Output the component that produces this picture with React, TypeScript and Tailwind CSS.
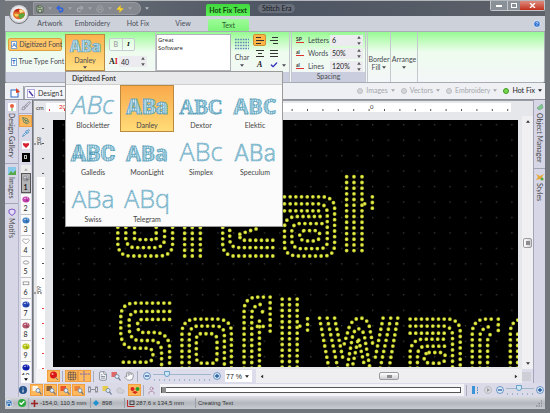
import { useState } from 'react'
import type { ReactNode } from 'react'
import {
  Brush, Check, Grid3x3, Hand, HelpCircle, PenTool, Pipette, Redo2, Save, Undo2, Zap, FileText, Cloud, User, Printer
} from 'lucide-react'

const ribbonTabs = [
  { name: 'Artwork', width: 'w-[38px]' },
  { name: 'Embroidery', width: 'w-[47px]' },
  { name: 'Hot Fix', width: 'w-[44px]' },
  { name: 'View', width: 'w-[46px]' },
]

interface FontSample {
  name: string
  sample: string
  kind: 'thin' | 'thick'
  italic?: boolean
  weight: number
  family: string
  size: number
}

const fonts: FontSample[] = [
  { name: 'Blockletter', sample: 'ABc', kind: 'thin', italic: true, weight: 300, family: 'Open Sans', size: 28 },
  { name: 'Danley', sample: 'ABa', kind: 'thick', weight: 900, family: 'Inter', size: 22 },
  { name: 'Dextor', sample: 'ABC', kind: 'thick', weight: 700, family: 'Liberation Serif', size: 22 },
  { name: 'Elektic', sample: 'ABC', kind: 'thick', weight: 700, family: 'Open Sans', size: 23 },
  { name: 'Galledis', sample: 'ABC', kind: 'thick', weight: 900, family: 'Roboto', size: 24 },
  { name: 'MoonLight', sample: 'ABa', kind: 'thick', weight: 700, family: 'Open Sans', size: 23 },
  { name: 'Simplex', sample: 'ABc', kind: 'thin', weight: 300, family: 'Open Sans', size: 27 },
  { name: 'Speculum', sample: 'ABa', kind: 'thin', weight: 300, family: 'Inter', size: 24 },
  { name: 'Swiss', sample: 'ABa', kind: 'thin', weight: 300, family: 'Open Sans', size: 26 },
  { name: 'Telegram', sample: 'ABq', kind: 'thin', weight: 300, family: 'Open Sans', size: 27 },
]

const stones = [
  { id: 1, shape: 'gem', color: '#9a9aa2' },
  { id: 2, shape: 'gem', color: '#c53fae' },
  { id: 3, shape: 'gem', color: '#3f7fc4' },
  { id: 4, shape: 'heart', color: '#8a8a8a' },
  { id: 5, shape: 'oval', color: '#8a8a8a' },
  { id: 6, shape: 'rect', color: '#8a8a8a' },
  { id: 7, shape: 'gem', color: '#2748b8' },
  { id: 8, shape: 'gem', color: '#b5546c' },
  { id: 9, shape: 'gem', color: '#b9c81c' },
  { id: 10, shape: 'gem', color: '#1420b4' },
]

// Rows of stones for each letter, three units per screen pixel
const stitchPaths = [
  // G
  'M53 120V220Q55 257 90 257H180Q217 255 217 220V150',
  'M77 120V205Q80 232 105 232H165Q193 230 193 205V150',
  'M103 120V205Q110 208 120 208H168V150',
  // r
  'M253 257V120', 'M276 257V120', 'M300 257V120',
  // e
  'M517 257H398Q367 252 367 222V120',
  'M517 232H415Q388 232 388 205V120',
  'M517 210H426L412 194L447 182L480 172',
  // a
  'M552 80H670Q702 84 702 115V225Q700 257 670 257H590Q552 255 552 225V170Q554 139 590 139H660',
  'M552 101H655Q680 103 680 130V215Q680 235 655 235H600Q574 233 574 210V180Q577 160 597 160H665',
  'M552 122H657',
  'M610 181H645Q660 182 657 200Q655 212 640 212H615Q597 210 597 195Z',
  // t
  'M738 20V258', 'M760 20V258', 'M784 20V258', 'M792 101h1', 'M815 80V126',
  // S
  'M208 398H98Q62 402 62 440V490Q65 533 102 533H145Q160 535 158 560Q155 575 140 575H62',
  'M208 423H112Q87 425 87 450V475Q90 510 118 510H160Q184 514 184 545V610',
  'M208 447H125Q110 450 112 470Q115 486 130 486H170Q206 492 208 530V610',
  'M62 598H165',
  // o
  'M245 610V482Q250 446 288 446H355Q393 450 393 485V610',
  'M267 610V492Q270 467 292 467H350Q372 470 372 492V610',
  'M300 490H335Q352 492 350 515V560Q350 578 335 578H305Q288 576 288 560V505Q290 490 300 490',
  // f
  'M431 610V415Q435 380 472 380H495',
  'M454 610V428Q458 402 486 402',
  'M477 588V440', 'M486 424h1', 'M471 468H495', 'M509 380V494',
  // t
  'M545 386V610', 'M567 386V610', 'M590 386V610', 'M598 467h1', 'M621 445V493',
  // w
  'M657 443L688 610', 'M680 443L712 595', 'M702 443L728 570',
  'M891 443L862 610', 'M870 443L838 595', 'M847 443L822 570',
  'M731 520L747 465Q760 443 780 443Q800 445 806 468L817 525',
  'M738 600L757 490Q773 460 790 490L809 600',
  'M757 580L773 503L790 580',
  // a
  'M928 446H1045Q1078 450 1078 485V610',
  'M928 467H1030Q1055 470 1055 495V610',
  'M928 488H1034',
  'M928 610V545Q932 506 968 506H1036',
  'M950 610V555Q952 527 975 527H1045',
  'M985 546H1020Q1035 548 1033 562Q1032 578 1015 578H985Q970 575 970 562Q970 548 985 546',
  // r
  'M1114 610V482Q1120 446 1155 446H1176',
  'M1137 610V495Q1142 468 1176 468',
  'M1160 610V510Q1162 490 1176 490',
  'M1192 446V493',
  // e
  'M1228 610V482Q1232 448 1265 446',
  'M1250 610V490Q1254 468 1280 468',
]

function Caret({ className = '' }: { className?: string }) {
  return (
    <svg viewBox="0 0 6 4" className={`w-1 h-[3px] shrink-0 ${className}`} fill="currentColor">
      <path d="M0 0h6L3 4z" />
    </svg>
  )
}

function Spinner() {
  return (
    <svg viewBox="0 0 4 10" className="w-1 h-[9px] shrink-0 text-[#555]" fill="currentColor">
      <path d="M0 3h4L2 0zM0 7h4L2 10z" />
    </svg>
  )
}

function Separator() {
  return <span className="w-px h-[11px] mx-[2px] bg-[#a9acba] shrink-0" />
}

function FontPreview({ font, className = '' }: { font: FontSample; className?: string }) {
  const thin = font.kind === 'thin'
  return (
    <svg viewBox="0 0 50 30" className={`overflow-visible ${className}`} aria-hidden="true">
      <defs>
        <pattern id="threads" width="2.500" height="2.500" patternUnits="userSpaceOnUse">
          <rect width="2.500" height="2.500" fill="#86bdd2" />
          <rect width="0.900" height="2.500" fill="#e2f0f5" />
        </pattern>
      </defs>
      <text
        x="25"
        y="24"
        textAnchor="middle"
        fontFamily={`"${font.family}", sans-serif`}
        fontSize={font.size}
        fontWeight={font.weight}
        fontStyle={font.italic ? 'italic' : 'normal'}
        fill={thin ? '#8fc4d8' : 'url(#threads)'}
        stroke="#4f9ab6"
        strokeWidth={thin ? 0.5 : 0.9}
        strokeDasharray={thin ? '1.5 0.8' : '1.8 0.4'}
      >
        {font.sample}
      </text>
    </svg>
  )
}

function StoneIcon({ shape, color }: { shape: string; color: string }) {
  return (
    <svg viewBox="0 0 10 8" className="w-[8px] h-[7px] shrink-0">
      {shape === 'heart' && <path d="M5 7L1 3.5C0 1 3.5 0 5 2C6.500 0 10 1 9 3.500Z" fill="#fff" stroke={color} strokeWidth="0.8" />}
      {shape === 'oval' && <ellipse cx="5" cy="4" rx="3.500" ry="2" fill="#fff" stroke={color} />}
      {shape === 'rect' && <rect x="1.500" y="2" width="7" height="3.500" fill="#fff" stroke={color} />}
      {shape === 'gem' && (
        <>
          <ellipse cx="5" cy="4" rx="4.500" ry="3.800" fill={color} />
          <path d="M2 3L4 1.500L5 3.500ZM6 1l2 1-1 1z" fill="#fff" opacity="0.8" />
          <path d="M5 4l3 1-2 2z" fill="#000" opacity="0.3" />
        </>
      )}
    </svg>
  )
}

function ToolButton({ label, active, children }: { label: string; active?: boolean; children: ReactNode }) {
  return (
    <button
      type="button"
      aria-label={label}
      className={`w-[13px] h-[12px] shrink-0 flex items-center justify-center ${active ? 'bg-[#ffb85c] border border-[#f0a040]' : ''}`}
    >
      {children}
    </button>
  )
}

function ZoomCircle({ sign }: { sign: '-' | '+' }) {
  return (
    <button type="button" aria-label={sign === '-' ? 'Zoom out' : 'Zoom in'} className="shrink-0">
      <svg viewBox="0 0 10 10" className="w-2 h-2 block">
        <circle cx="5" cy="5" r="4.300" fill="#dcecf8" stroke="#4a7fb8" />
        <path d={sign === '-' ? 'M2.500 5h5' : 'M2.500 5h5M5 2.500v5'} stroke="#24589a" strokeWidth="1.600" />
      </svg>
    </button>
  )
}

function ZoomSlider({ label, value, className }: { label: string; value: number; className: string }) {
  return (
    <span className={`flex flex-col gap-px ${className}`}>
      <input
        type="range"
        aria-label={label}
        defaultValue={value}
        className="appearance-none w-full h-[6px] bg-transparent [&::-webkit-slider-runnable-track]:h-px [&::-webkit-slider-runnable-track]:bg-[#9fb6cc] [&::-webkit-slider-thumb]:appearance-none [&::-webkit-slider-thumb]:w-[6px] [&::-webkit-slider-thumb]:h-[6px] [&::-webkit-slider-thumb]:-mt-[3px] [&::-webkit-slider-thumb]:rounded-b-full [&::-webkit-slider-thumb]:border [&::-webkit-slider-thumb]:border-[#6aa0c8] [&::-webkit-slider-thumb]:bg-[#cfe6f5]"
      />
      <svg className="w-full h-[2px]">
        <line x1="1" y1="1" x2="100%" y2="1" stroke="#9fb6cc" strokeWidth="2" strokeDasharray="1 4" />
      </svg>
    </span>
  )
}

function TitleBar() {
  return (
    <header className="h-4 shrink-0 flex items-start border-t border-[#b4b8bc] bg-linear-to-r from-[#74777c] via-[#4d5563] to-[#5d6168]">
      <div className="ml-[28px] mt-px h-[13px] w-[108px] pl-[2px] flex items-center gap-1 rounded-r-full border border-[#9a9da3] bg-[#85888e] text-[#a4a7ac]">
        <button type="button" aria-label="Save"><Save className="w-2 h-2 text-[#2e4326]" fill="#b8c8b0" /></button>
        <Caret />
        <button type="button" aria-label="Undo"><Undo2 className="w-2 h-2 text-[#2f62e0]" strokeWidth={5} /></button>
        <Caret />
        <button type="button" aria-label="Redo"><Redo2 className="w-2 h-2" strokeWidth={4} /></button>
        <Caret />
        <button type="button" aria-label="Print"><Printer className="w-2 h-2" /></button>
        <Caret />
        <button type="button" aria-label="Run"><Zap className="w-2 h-2 text-[#e8c020]" fill="#f6d93c" /></button>
        <Caret />
      </div>
      <Caret className="ml-1 mt-[6px] text-[#b8bbc0]" />
      <div className="ml-[57px] mt-[3px] w-[44px] h-3 flex items-center justify-center rounded-t-xs bg-linear-to-b from-[#3fd83c] to-[#5cf058] text-[#10420f] font-bold whitespace-nowrap">
        Hot Fix Text
      </div>
      <h1 className="ml-2 mt-[3px] px-1 rounded-full bg-white/15 text-[#15181d] whitespace-nowrap">Stitch Era</h1>
      <div className="ml-auto h-[10px] flex rounded-b-xs overflow-hidden border border-t-0 border-[#c3c7cc]">
        <button type="button" aria-label="Minimize" className="w-[17px] flex items-center justify-center bg-[#8a9098] border-r border-[#c3c7cc]">
          <span className="w-[6px] h-[2px] bg-white" />
        </button>
        <button type="button" aria-label="Maximize" className="w-[12px] flex items-center justify-center bg-[#8a9098]">
          <span className="w-[6px] h-[5px] border border-white" />
        </button>
        <button type="button" aria-label="Close" className="w-[24px] flex items-center justify-center bg-linear-to-b from-[#dc8a7c] to-[#c22c18]">
          <svg viewBox="0 0 8 6" className="w-[7px] h-[5px]" stroke="#fff" strokeWidth="1.600"><path d="M1 0l6 6M7 0L1 6" /></svg>
        </button>
      </div>
    </header>
  )
}

function AppButton() {
  return (
    <button type="button" aria-label="Application menu" className="absolute left-[9px] top-[4px] w-5 h-5 z-10">
      <svg viewBox="0 0 20 20">
        <circle cx="10" cy="10" r="9.500" fill="#d4d6da" stroke="#6d7177" />
        <circle cx="10" cy="10" r="7.500" fill="#eceef0" />
        <ellipse cx="10" cy="10" rx="6" ry="5.200" fill="#e06a28" />
        <path d="M4.500 8q2.500-4 6-3l-1 3q-3-1-5 0z" fill="#c02c20" />
        <path d="M9 11q4-3 7-1-1 4-5 5z" fill="#5aa83c" />
        <path d="M5 10q4-1 5 1l-2 2q-2 0-3-3z" fill="#f4cf58" />
        <path d="M10 6q4-1 5 2l-4 1z" fill="#ffe08a" />
      </svg>
    </button>
  )
}

function TabStrip() {
  return (
    <nav className="h-[15px] shrink-0 flex items-stretch pl-[26px] bg-[#cdd1da] text-[#4a4e58]">
      {ribbonTabs.map((tab) => (
        <button key={tab.name} type="button" className={`${tab.width} text-center whitespace-nowrap`}>{tab.name}</button>
      ))}
      <button type="button" className="w-[41px] mt-[3px] ml-[2px] rounded-t-xs bg-linear-to-b from-[#9dfb98] to-[#7df57a] text-[#2d5c2c]">
        Text
      </button>
      <button type="button" aria-label="Help" className="ml-auto mr-1">
        <HelpCircle className="w-2 h-2 text-white" fill="#2f6fd0" />
      </button>
    </nav>
  )
}

function FontMenu({ selected, onSelect }: { selected: string; onSelect: (name: string) => void }) {
  return (
    <div className="absolute left-0 top-full z-20 w-[218px] bg-[#fbfbfb] border border-[#9a9a9a] text-[#444]">
      <div className="h-[13px] px-[6px] flex items-center bg-[#e8e9eb] border-b border-[#d0d0d0] font-bold">Digitized Font</div>
      <div className="grid grid-cols-4">
        {fonts.map((font) => (
          <button
            key={font.name}
            type="button"
            onClick={() => onSelect(font.name)}
            className={`h-[47px] flex flex-col items-center justify-between pt-[6px] pb-px border ${
              selected === font.name
                ? 'border-[#b98a40] bg-linear-to-b from-[#f9a94a] to-[#ffdc78]'
                : 'border-transparent'
            }`}
          >
            <FontPreview font={font} className="w-[50px] h-[28px]" />
            <span className="leading-[9px]">{font.name}</span>
          </button>
        ))}
      </div>
    </div>
  )
}

function AlignIcon({ d }: { d: string }) {
  return (
    <svg viewBox="0 0 8 8" className="w-2 h-2" stroke="#333" strokeWidth="1" fill="none"><path d={d} /></svg>
  )
}

function SpacingRow({ label, value, icon }: { label: string; value: string; icon: string }) {
  return (
    <label className="h-[12px] flex items-center">
      <span className="w-2 mr-1 text-[5px] leading-[5px] font-bold text-[#333] border-b border-[#e03030]">{icon}</span>
      <span className="w-[22px]">{label}</span>
      <input defaultValue={value} className="w-[25px] h-[11px] pl-[2px] bg-[#ececf0] text-[#222] outline-none" />
      <span className="w-2 h-[11px] flex items-center justify-center bg-[#ececf0]"><Spinner /></span>
    </label>
  )
}

function Ribbon() {
  const [fontName, setFontName] = useState('Danley')
  const current = fonts.find((f) => f.name === fontName) || fonts[1]

  return (
    <section className="h-[52px] shrink-0 flex border border-[#a8acb4] rounded-b-xs bg-linear-to-b from-[#96fa92] via-[#eefcee] via-40% to-[#f4f6f8] text-[#4a4a52]">
      {/* Font group */}
      <div className="w-[150px] flex flex-col border-r border-[#c4c8ce]">
        <div className="flex-1 flex pt-[2px]">
          <div className="w-[59px] pl-[2px] pt-1 flex flex-col gap-1 items-start">
            <button type="button" className="h-[13px] w-[54px] pl-[2px] flex items-center gap-[2px] rounded-xs border border-[#e0a040] bg-[#ffc566] whitespace-nowrap">
              <span className="w-[7px] h-[8px] border border-[#7aa0d0] bg-white text-[6px] leading-[6px] font-bold text-[#2868c0]">A</span>
              Digitized Font
            </button>
            <button type="button" className="h-[13px] w-[56px] pl-[3px] flex items-center gap-[2px] whitespace-nowrap">
              <span className="w-[7px] h-[8px] border border-[#7aa0d0] bg-white text-[6px] leading-[6px] font-bold text-[#2868c0]">T</span>
              True Type Font
            </button>
          </div>
          <div className="relative h-[37px]">
            <button type="button" className="w-[40px] h-[37px] flex flex-col items-center border border-[#b98a40] bg-linear-to-b from-[#fbb24e] to-[#ffdf80]">
              <FontPreview font={current} className="w-[36px] h-[21px]" />
              <span className="leading-[8px]">{current.name}</span>
              <Caret className="mt-[2px]" />
            </button>
            <FontMenu selected={fontName} onSelect={setFontName} />
          </div>
          <div className="pl-1 pt-1 flex flex-col gap-1">
            <div className="w-[26px] h-[13px] flex rounded-xs border border-[#c8ccd2] bg-white/50">
              <button type="button" className="flex-1 text-[#a8a8b0] font-bold">B</button>
              <button type="button" className="flex-1 border-l border-[#c8ccd2] text-black italic font-bold font-['Liberation_Serif',serif]">I</button>
            </div>
            <label className="h-[13px] flex items-center">
              <span className="w-[10px] font-bold text-[8px] text-[#222] font-['Liberation_Serif',serif]">A<span className="text-[#e02020]">I</span></span>
              <input aria-label="Font size" defaultValue="40" className="w-[20px] h-[11px] pl-[2px] bg-[#ececf0] text-[#222] outline-none" />
              <span className="w-2 h-[11px] flex items-center justify-center bg-[#ececf0]"><Spinner /></span>
            </label>
          </div>
        </div>
        <div className="h-[10px] bg-[#c9cddd]" />
      </div>

      {/* Text group */}
      <div className="w-[134px] flex flex-col border-r border-[#c4c8ce]">
        <div className="flex-1 flex pt-[2px]">
          <textarea
            aria-label="Text"
            defaultValue={'Great\nSoftware'}
            className="w-[75px] h-[37px] p-px resize-none overflow-hidden bg-white border border-[#b0b4ba] text-[6px] leading-[8px] text-[#222] outline-none font-['Open_Sans',sans-serif]"
          />
          <button type="button" className="w-[22px] pt-1 flex flex-col items-center">
            <svg viewBox="0 0 14 12" className="w-[14px] h-[12px]">
              <path d="M0 1.500h14M0 4.500h14M0 7.500h14M0 10.500h14" stroke="#5c86b4" strokeWidth="1.500" strokeDasharray="1.600 1" />
            </svg>
            <span className="mt-[3px] leading-[8px]">Char</span>
            <Caret className="mt-[3px]" />
          </button>
          <div className="grid grid-cols-2 w-[28px] content-start gap-px items-center justify-items-center">
            <button type="button" aria-label="Align left" className="w-[13px] h-[12px] flex items-center justify-center rounded-xs border border-[#d09030] bg-[#ffb648]"><AlignIcon d="M0 1.500h5M0 4.500h8M0 7.500h5" /></button>
            <button type="button" aria-label="Align right"><AlignIcon d="M2 1.500h6M0 4.500h8M3 7.500h5" /></button>
            <button type="button" aria-label="Center" className="h-3"><AlignIcon d="M0 1.500h8M2 4.500h4M0 7.500h8" /></button>
            <button type="button" aria-label="Justify" className="h-3"><AlignIcon d="M0 1.500h8M0 4.500h8M0 7.500h8" /></button>
            <button type="button" aria-label="Script" className="text-[8px] leading-[9px] italic font-bold text-[#222] font-['Liberation_Serif',serif]">A</button>
            <button type="button" aria-label="Spelling"><Check className="w-2 h-2 text-[#3838c0]" strokeWidth={4} /></button>
          </div>
          <Caret className="mt-[30px] ml-px" />
        </div>
        <div className="h-[10px] bg-[#c9cddd]" />
      </div>

      {/* Spacing group */}
      <fieldset className="w-[75px] ml-px flex flex-col border-x border-[#c4c8ce]">
        <div className="flex-1 pl-1 pt-[2px] flex flex-col gap-px">
          <SpacingRow label="Letters" value="6" icon="SP" />
          <SpacingRow label="Words" value="50%" icon="al" />
          <SpacingRow label="Lines" value="120%" icon="al" />
        </div>
        <div className="h-[10px] leading-[9px] text-center bg-[#c9cddd]">Spacing</div>
      </fieldset>

      <button type="button" className="w-[24px] ml-px pt-3 flex flex-col items-center justify-center leading-[8px] border-x border-[#c4c8ce]">
        Border
        <span className="flex items-center gap-[2px]">Fill <Caret /></span>
      </button>
      <button type="button" className="w-[27px] pt-3 flex flex-col items-center justify-center leading-[8px] border-r border-[#c4c8ce]">
        Arrange
        <Caret className="my-[3px]" />
      </button>
    </section>
  )
}

function DocumentBar() {
  const layers = ['Images', 'Vectors', 'Embroidery']
  return (
    <div className="h-[17px] shrink-0 flex items-end bg-[#eff0f4] border-b border-[#8f939b]">
      <button type="button" aria-label="Documents" className="ml-px w-[18px] h-[13px] flex items-center justify-center border-r border-[#a0a4ac]">
        <svg viewBox="0 0 10 10" className="w-[10px] h-[10px]">
          <rect x="1" y="2" width="7" height="7" fill="#fff" stroke="#2f68c4" />
          <path d="M6 0l4 4-4 1z" fill="#e04020" />
        </svg>
      </button>
      <button type="button" className="w-[200px] h-[13px] pl-[2px] flex items-center gap-[3px] border-l border-t border-[#a0a4ac] rounded-tl-xs bg-[#f4f5f8] text-[#333]">
        <svg viewBox="0 0 8 9" className="w-2 h-[9px]">
          <rect x="0.500" y="0.500" width="7" height="8" fill="#fff" stroke="#b0a8d8" />
          <path d="M2 2l4 5" stroke="#4838a8" strokeWidth="1.400" />
        </svg>
        Design1
      </button>
      <div className="ml-auto mb-1 mr-[3px] flex items-center gap-[6px] text-[#a4a6aa]">
        {layers.map((layer) => (
          <button key={layer} type="button" className="flex items-center gap-[3px]">
            <span className="w-[6px] h-[6px] rounded-full bg-[#d4d5d8] border border-[#bcbec2]" />
            {layer}
            <Caret />
          </button>
        ))}
        <button type="button" className="flex items-center gap-[3px] text-[#222]">
          <span className="w-[6px] h-[6px] rounded-full bg-[#78d648] border border-[#3c9c28]" />
          Hot Fix
          <Caret />
        </button>
      </div>
    </div>
  )
}

function SideTab({ label, children }: { label: string; children: ReactNode }) {
  return (
    <button type="button" className="w-full pt-[3px] pb-[5px] flex flex-col items-center gap-[2px] border-b border-[#a4a4b8]">
      {children}
      <span className="[writing-mode:vertical-rl] leading-[9px]">{label}</span>
    </button>
  )
}

function StonePalette() {
  return (
    <aside className="w-[13px] shrink-0 flex flex-col items-center overflow-hidden bg-[#d9d9e8]">
      <ToolButton label="Brush"><Brush className="w-[10px] h-[10px] text-[#85858f]" /></ToolButton>
      <span className="w-full h-px my-px bg-[#b0b0c4]" />
      <ToolButton label="Draw" active><PenTool className="w-2 h-2 text-[#2f7a70]" /></ToolButton>
      <ToolButton label="Pick color"><Pipette className="w-2 h-2 text-[#2f88c0]" /></ToolButton>
      <ToolButton label="Stone">
        <svg viewBox="0 0 8 8" className="w-2 h-2"><rect width="8" height="8" fill="#fff" /><path d="M4 7L1 4Q0 1 4 2.500Q8 1 7 4z" fill="#d82030" /></svg>
      </ToolButton>
      <ToolButton label="Background">
        <span className="w-2 h-[9px] bg-black flex items-center justify-center"><span className="w-[3px] h-1 border border-[#bbb]" /></span>
      </ToolButton>
      <button type="button" aria-label="Scroll up" className="w-[10px] h-[8px] mt-[2px] flex items-center justify-center bg-[#ececec] text-[#aaa]">
        <Caret className="rotate-180" />
      </button>
      <ul className="flex-1 min-h-0 overflow-hidden w-[10px]">
        {stones.map((stone) => (
          <li
            key={stone.id}
            className={`h-[21px] flex flex-col items-center pt-[2px] border-b border-[#c4c4c8] leading-[11px] text-[#222] ${
              stone.id === 1 ? 'bg-[#b4b4b6] ring-1 ring-inset ring-[#555] font-bold' : 'bg-[#fafafa]'
            }`}
          >
            <StoneIcon shape={stone.shape} color={stone.color} />
            {stone.id}
          </li>
        ))}
      </ul>
      <button type="button" aria-label="Scroll down" className="w-[10px] h-[8px] flex items-center justify-center bg-[#fafafa] text-black">
        <Caret />
      </button>
    </aside>
  )
}

function Canvas() {
  return (
    <svg className="flex-1 min-w-0 h-full bg-black" viewBox="0 0 1392 744" preserveAspectRatio="xMinYMin slice">
      <defs>
        <pattern id="grid" x="29" y="12" width="46.300" height="46.300" patternUnits="userSpaceOnUse">
          <rect width="4" height="4" fill="#3a3a3a" />
        </pattern>
      </defs>
      <rect width="1392" height="744" fill="url(#grid)" />
      <g transform="translate(141 150)" fill="none" strokeLinecap="round">
        {stitchPaths.map((d) => (
          <g key={d}>
            <path d={d} stroke="#bcc828" strokeWidth="11.500" strokeDasharray="0 17" />
            <path d={d} stroke="#eef25a" strokeWidth="6" strokeDasharray="0 17" />
          </g>
        ))}
      </g>
    </svg>
  )
}

function MagnifierIcon({ color }: { color: string }) {
  return (
    <svg viewBox="0 0 10 10" className="w-[10px] h-[10px]" fill="none">
      <rect x="0.500" y="1" width="5.500" height="5" fill={color} opacity="0.85" />
      <circle cx="6" cy="5.500" r="2" fill="#e4f0fa" stroke="#7c90a8" />
      <path d="M7.500 7L9.500 9.500" stroke="#5c6c80" strokeWidth="1.200" />
    </svg>
  )
}

function ViewBar() {
  return (
    <div className="h-[14px] shrink-0 flex items-center bg-[#dcdcea]">
      <ToolButton label="Record" active>
        <svg viewBox="0 0 10 10" className="w-[10px] h-[10px]">
          <circle cx="4.500" cy="4" r="3.500" fill="#d81818" /><circle cx="3.500" cy="3" r="1" fill="#ffb0a0" /><path d="M6 6l3 3" stroke="#777" />
        </svg>
      </ToolButton>
      <Separator />
      <ToolButton label="Grid" active><Grid3x3 className="w-[10px] h-[10px] text-[#705848]" /></ToolButton>
      <ToolButton label="Guides" active>
        <svg viewBox="0 0 10 10" className="w-[10px] h-[10px]"><path d="M0 3h10M4 0v10" stroke="#7868a8" strokeDasharray="2 0.600" /></svg>
      </ToolButton>
      <Separator />
      <ToolButton label="Zoom to page"><FileText className="w-[10px] h-[10px] text-[#6a7484]" fill="#fff" /></ToolButton>
      <ToolButton label="Zoom"><MagnifierIcon color="#e05050" /></ToolButton>
      <ToolButton label="Pan"><Hand className="w-[10px] h-[10px] text-[#8c8c90]" fill="#fff" /></ToolButton>
      <Separator />
      <span className="ml-[3px] flex items-center gap-[2px]">
        <ZoomCircle sign="-" />
        <ZoomSlider label="Zoom" value={22} className="w-[58px]" />
        <ZoomCircle sign="+" />
      </span>
      <label className="ml-1 w-[27px] h-[12px] pr-[3px] flex items-center bg-white text-[#222]">
        <select aria-label="Zoom level" defaultValue="77" className="appearance-none flex-1 min-w-0 pl-px leading-[9px] font-['Liberation_Sans',sans-serif]">
          <option value="77">77 %</option>
          <option value="100">100 %</option>
        </select>
        <Caret />
      </label>
      <div className="ml-1 flex-1 h-full flex items-center justify-between px-1 bg-[#efeff1] text-[#333]">
        <Caret className="rotate-90" />
        <span className="w-[20px] h-[8px] rounded-xs border border-[#9c9ca0] bg-linear-to-b from-white to-[#d0d0d4] flex items-center justify-center">
          <span className="w-[5px] h-[3px] bg-[#8c8c90]" />
        </span>
        <Caret className="-rotate-90" />
      </div>
      <span className="w-[9px] h-[9px] mr-[2px] bg-[#cdced6]" />
    </div>
  )
}

function DocumentWindow() {
  return (
    <main className="flex-1 min-w-0 flex flex-col ml-px border-l border-t border-[#9a9ca4] bg-[#e6e7ea]">
      <div className="flex-1 min-h-0 flex">
        {/* Vertical ruler */}
        <div className="w-[12px] shrink-0 flex flex-col">
          <span className="h-[15px] pl-[2px] pt-[2px] text-[6px] leading-[10px] text-[#333]">cm</span>
          <svg className="flex-1 w-full">
            <rect x="3" y="61" width="8" height="100%" fill="#fff" />
            <line x1="9" y1="12" x2="9" y2="172" stroke="#555" strokeWidth="2" strokeDasharray="1 14" />
            <line x1="9" y1="192" x2="9" y2="100%" stroke="#e04040" strokeWidth="2" strokeDasharray="1 14" />
            <path d="M0 28h9M0 177h9" stroke="#555" strokeDasharray="2 1" />
            <text x="3" y="21" fontSize="5" fill="#333" transform="rotate(90 3 21)">80</text>
            <text x="3" y="170" fontSize="5" fill="#333" transform="rotate(90 3 170)">60</text>
          </svg>
        </div>
        <div className="flex-1 min-w-0 flex flex-col">
          <div className="h-[9px] mt-[2px] mr-[11px] bg-white">
            <svg className="block w-full h-full">
              <line x1="3" y1="7" x2="20" y2="7" stroke="#e04040" strokeWidth="2" strokeDasharray="1 14" />
              <text x="13" y="6" fontSize="6" fill="#e02020">20</text>
              <line x1="30" y1="7" x2="100%" y2="7" stroke="#555" strokeWidth="2" strokeDasharray="1 14.400" />
              <text x="324" y="6" fontSize="6" fill="#333">0</text>
            </svg>
          </div>
          <div className="flex-1 min-h-0 flex mt-2 ml-[7px] mr-1 mb-[2px]">
            <Canvas />
          </div>
        </div>
        {/* Vertical scrollbar */}
        <div className="w-[11px] mt-[15px] shrink-0 flex flex-col items-center justify-between py-1 bg-[#f0f0f2] text-[#333]">
          <Caret className="rotate-180" />
          <span className="w-[9px] h-[10px] rounded-xs border border-[#9c9ca0] bg-linear-to-r from-white to-[#d0d0d4] flex items-center justify-center">
            <span className="w-1 h-1 bg-[#8c8c90]" />
          </span>
          <Caret />
        </div>
      </div>
      <div className="flex">
        <span className="w-[11px] shrink-0 ml-[2px] bg-[#f4f4f6]" />
        <div className="flex-1 min-w-0"><ViewBar /></div>
      </div>
    </main>
  )
}

function SimulationBar() {
  return (
    <div className="h-[14px] shrink-0 flex items-center bg-[#dadae8]">
      <button type="button" aria-label="Info" className="w-[11px]">
        <svg viewBox="0 0 8 8" className="w-2 h-2"><circle cx="4" cy="4" r="4" fill="#24508c" /><path d="M4 1.500v1M4 3.500v3" stroke="#fff" /></svg>
      </button>
      <div className="flex gap-px">
        <ToolButton label="Show outline" active><MagnifierIcon color="#fff" /></ToolButton>
        <ToolButton label="Show stitches" active><MagnifierIcon color="#7a5034" /></ToolButton>
        <ToolButton label="Show jumps" active><MagnifierIcon color="#e84020" /></ToolButton>
        <ToolButton label="Show nodes" active><MagnifierIcon color="#e87830" /></ToolButton>
        <ToolButton label="Connections">
          <svg viewBox="0 0 10 8" className="w-[10px] h-2" fill="none" stroke="#909098"><rect x="0.500" y="1" width="2" height="5" /><rect x="7.500" y="1" width="2" height="5" /><path d="M3 3.500h4" /></svg>
        </ToolButton>
        <ToolButton label="Stones"><MagnifierIcon color="#e8c830" /></ToolButton>
        <ToolButton label="Background"><Cloud className="w-[9px] h-[9px] text-[#bcbcc4]" fill="#d0d0d8" /></ToolButton>
        <ToolButton label="Colors" active>
          <svg viewBox="0 0 10 8" className="w-[10px] h-2"><circle cx="2.500" cy="3" r="2" fill="#d82020" /><circle cx="7.500" cy="3" r="2" fill="#28a028" /><path d="M2 6l3-1 3 1-3 2z" fill="#d02818" /></svg>
        </ToolButton>
      </div>
      <Separator />
      <User className="w-[9px] h-[9px] mx-px text-[#a878a0]" fill="#e4e4ea" />
      <div className="flex-1 h-[12px] ml-[3px] pl-px pr-[3px] bg-[#f4f4f6] flex items-center">
        <input
          type="range"
          aria-label="Simulation"
          defaultValue={0}
          className="appearance-none w-full h-[6px] bg-white border border-[#555] [&::-webkit-slider-thumb]:appearance-none [&::-webkit-slider-thumb]:w-1 [&::-webkit-slider-thumb]:h-[6px] [&::-webkit-slider-thumb]:bg-[#8c8c8c]"
        />
      </div>
      <Separator />
      <svg viewBox="0 0 8 8" className="w-2 h-2 mx-[2px]"><rect x="1" y="0" width="3" height="8" fill="#3c94d8" /><path d="M6.500 1v7" stroke="#4c8cc0" strokeDasharray="1.500 1" /></svg>
      <button type="button" aria-label="Play" className="mx-[3px]">
        <svg viewBox="0 0 8 8" className="w-2 h-2 block"><circle cx="4" cy="4" r="3.500" fill="#dcdce2" stroke="#b8b8c0" /><path d="M3 2l3 2-3 2z" fill="#9898a0" /></svg>
      </button>
      <span className="ml-px mr-px flex items-center gap-[2px]">
        <ZoomCircle sign="-" />
        <ZoomSlider label="Speed" value={45} className="w-[28px]" />
        <ZoomCircle sign="+" />
      </span>
    </div>
  )
}

function StatusBar() {
  return (
    <footer className="h-[12px] shrink-0 flex items-center text-[6px] text-[#333] font-['Liberation_Sans',sans-serif] bg-linear-to-b from-[#d8dade] via-[#b4b8be] to-[#c8ccd0] whitespace-nowrap">
      <Save className="w-2 h-2 text-white" fill="#2868b0" />
      <span className="ml-[5px] w-2 h-2 rounded-full bg-[#2ca83c] flex items-center justify-center">
        <Check className="w-[6px] h-[6px] text-white" strokeWidth={5} />
      </span>
      <Separator />
      <span className="w-[59px] flex items-center gap-[2px]">
        <svg viewBox="0 0 7 7" className="w-[7px] h-[7px]"><path d="M3.500 0v7M0 3.500h7" stroke="#9c2424" strokeWidth="1.600" /></svg>
        -154,0, 110,5 mm
      </span>
      <span className="w-[34px] h-[10px] pl-[2px] flex items-center gap-[3px] border-l border-[#999ea6]">
        <svg viewBox="0 0 6 6" className="w-[6px] h-[6px]"><path d="M3 0l3 3-3 3-3-3z" fill="#2090d0" /></svg>
        898
      </span>
      <span className="w-[71px] h-[10px] pl-[2px] flex items-center gap-px border-l border-[#999ea6]">
        <svg viewBox="0 0 8 7" className="w-2 h-[7px]" fill="none"><path d="M0.500 0v6.500h7" stroke="#c03030" /><rect x="3" y="1" width="4" height="3.500" stroke="#444" /></svg>
        287,6 x 134,5 mm
      </span>
      <span className="h-[10px] pl-[2px] flex items-center border-l border-[#999ea6]">Creating Text</span>
      <svg viewBox="0 0 8 8" className="w-2 h-2 ml-auto mr-[2px]"><path d="M1 7h6M3.500 4.500h3.500M6 2h1" stroke="#8a8e96" strokeWidth="1.500" strokeDasharray="1.500 1" /></svg>
    </footer>
  )
}

export default function App() {
  return (
    <div className="relative h-screen flex flex-col overflow-hidden px-[5px] pb-1 bg-[#70767c] text-[7px] leading-[9px] font-['Lato','Open_Sans',sans-serif]">
      <AppButton />
      <TitleBar />
      <TabStrip />
      <Ribbon />
      <DocumentBar />
      <div className="flex-1 min-h-0 flex">
        <aside className="w-[14px] shrink-0 border-r border-[#b4b4c8] bg-[#d6d6e6] text-[#444]">
          <SideTab label="Design Gallery">
            <svg viewBox="0 0 8 8" className="w-2 h-2"><rect width="8" height="8" fill="#fff" /><circle cx="4" cy="3" r="2" fill="#e86040" /><path d="M4 5v3" stroke="#50a040" /></svg>
          </SideTab>
          <SideTab label="Images">
            <svg viewBox="0 0 8 8" className="w-2 h-2"><rect width="8" height="8" fill="#88c8e8" /><path d="M0 8l3-4 2 2 3-3v5z" fill="#58a848" /></svg>
          </SideTab>
          <button type="button" className="w-full pt-1 flex flex-col items-center gap-[2px]">
            <svg viewBox="0 0 8 8" className="w-2 h-2"><path d="M1 2q3-2 6 0v3L4 7.500 1 5z" fill="#e4dcf8" stroke="#7c54c4" /></svg>
            <span className="[writing-mode:vertical-rl] leading-[9px]">Motifs</span>
          </button>
        </aside>
        <div className="flex-1 min-w-0 flex flex-col">
          <div className="flex-1 min-h-0 flex">
            <StonePalette />
            <DocumentWindow />
            <aside className="w-[12px] shrink-0 border-l border-[#a4a4b8] bg-[#d6d6e6] text-[#444]">
              <SideTab label="Object Manager">
                <svg viewBox="0 0 8 8" className="w-2 h-2"><path d="M1 5l5-4 1 4-4 2z" fill="#80c890" stroke="#6c9c78" strokeWidth="0.600" /></svg>
              </SideTab>
              <button type="button" className="w-full pt-1 flex flex-col items-center gap-[2px]">
                <svg viewBox="0 0 8 8" className="w-2 h-2"><path d="M0 1l4 2 4-2-2 3 2 3-4-1-4 1 2-3z" fill="#e8a838" /><circle cx="6" cy="6" r="1.500" fill="#58a848" /></svg>
                <span className="[writing-mode:vertical-rl] leading-[9px]">Styles</span>
              </button>
            </aside>
          </div>
          <SimulationBar />
        </div>
      </div>
      <StatusBar />
    </div>
  )
}
